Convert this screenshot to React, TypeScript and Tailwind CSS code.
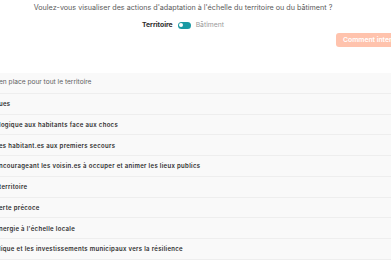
import React from "react";

const rows: { text: string; bold: boolean }[] = [
  { text: "en place pour tout le territoire", bold: false },
  { text: "ues", bold: true },
  { text: "logique aux habitants face aux chocs", bold: true },
  { text: "es habitant.es aux premiers secours", bold: true },
  { text: "ncourageant les voisin.es à occuper et animer les lieux publics", bold: true },
  { text: "territoire", bold: true },
  { text: "erte précoce", bold: true },
  { text: "nergie à l'échelle locale", bold: true },
  { text: "lique et les investissements municipaux vers la résilience", bold: true },
];

export default function App() {
  return (
    <div
      className="w-[391px] h-[260px] overflow-hidden bg-white"
      style={{ fontFamily: "Inter, 'Noto Sans', sans-serif" }}
    >
      <div className="w-[484px] ml-[-59px] flex flex-col">
        <div className="pt-[3px] text-center text-[7.2px] leading-[10px] text-[#5a5a5a]">
          Voulez-vous visualiser des actions d'adaptation à l'échelle du territoire ou du bâtiment ?
        </div>
        <div className="mt-[8px] flex items-center justify-center gap-[5px] text-[6.8px] leading-[8px]">
          <span className="font-bold text-[#2a2a2a]">Territoire</span>
          <span className="relative w-[13px] h-[7px] rounded-full bg-[#1a9aa3]">
            <span className="absolute left-[1.5px] top-[1.5px] w-[4px] h-[4px] rounded-full bg-white" />
          </span>
          <span className="text-[#9a9a9a]">Bâtiment</span>
        </div>
        <div className="mt-[4px] flex justify-end pr-[5px]">
          <div className="w-[84px] h-[14px] rounded-[3px] bg-[#ffc3ad] flex items-center pl-[7px] text-[6.8px] font-semibold text-white">
            Comment intervenir ?
          </div>
        </div>
        <div className="mt-[26px] flex flex-col">
          {rows.map((r, i) => (
            <div
              key={i}
              className="h-[20.75px] flex items-center bg-[#f9f9f9] border-b border-[#eeeeee] shadow-[0_2px_3px_rgba(0,0,0,0.04)] pl-[58px]"
            >
              <span
                className={
                  r.bold
                    ? "text-[6px] tracking-[0.32px] font-semibold text-[#2e2e2e]"
                    : "text-[6.6px] text-[#606060]"
                }
              >
                {r.text}
              </span>
            </div>
          ))}
        </div>
      </div>
    </div>
  );
}
